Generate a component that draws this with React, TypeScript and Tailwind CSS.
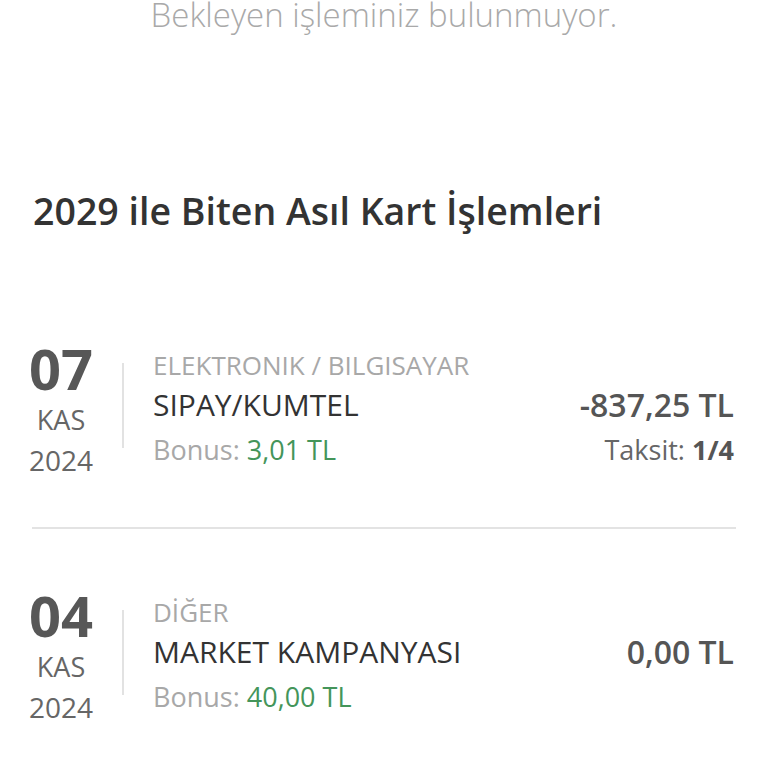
import React from "react";

type Tx = {
  day: string;
  month: string;
  year: string;
  category: string;
  merchant: string;
  bonus: string;
  amount: string;
  taksit?: string;
};

const txs: Tx[] = [
  {
    day: "07",
    month: "KAS",
    year: "2024",
    category: "ELEKTRONIK / BILGISAYAR",
    merchant: "SIPAY/KUMTEL",
    bonus: "3,01 TL",
    amount: "-837,25 TL",
    taksit: "1/4",
  },
  {
    day: "04",
    month: "KAS",
    year: "2024",
    category: "DİĞER",
    merchant: "MARKET KAMPANYASI",
    bonus: "40,00 TL",
    amount: "0,00 TL",
  },
];

function Row({ t, last }: { t: Tx; last: boolean }) {
  return (
    <div className={`flex items-start ${last ? "pt-[60px]" : "pb-[46px] border-b-2 border-[#e3e3e3]"}`}>
      <div className="w-[66px] ml-[-4px] text-center">
        <div className="mt-[-5px] text-[56px] leading-[62px] font-bold text-[#575757]">{t.day}</div>
        <div className="text-[27px] leading-[41px] text-[#666]">{t.month}</div>
        <div className="text-[28px] leading-[41px] text-[#666]">{t.year}</div>
      </div>
      <div className="ml-[28px] mt-[21px] w-[2px] h-[85px] bg-[#e2e2e2]" />
      <div className="ml-[29px] mt-[3px] flex-1">
        <div className="text-[26px] leading-[40px] text-[#a8a8a8]">{t.category}</div>
        <div className="text-[30px] leading-[40px] text-[#333]">{t.merchant}</div>
        <div className="mt-[5px] text-[27px] leading-[40px] text-[#a8a8a8]">
          Bonus: <span className="text-[#44955a]">{t.bonus}</span>
        </div>
      </div>
      <div className="mt-[43px] mr-[2px] text-right">
        <div className="text-[32px] leading-[40px] font-semibold text-[#555]">{t.amount}</div>
        {t.taksit && (
          <div className="mt-[5px] text-[27px] leading-[40px] text-[#666]">
            Taksit: <span className="font-bold text-[#555]">{t.taksit}</span>
          </div>
        )}
      </div>
    </div>
  );
}

export default function App() {
  return (
    <div
      className="w-[768px] h-[768px] bg-white overflow-hidden"
      style={{ fontFamily: '"Open Sans", "Noto Sans", sans-serif' }}
    >
      <p className="mt-[-3px] text-center text-[33px] leading-[36px] font-light text-[#a9a9a9]">
        Bekleyen işleminiz bulunmuyor.
      </p>
      <h2 className="mt-[156px] px-[33px] text-[37.5px] leading-[44px] font-semibold text-[#333]">
        2029 ile Biten Asıl Kart İşlemleri
      </h2>
      <div className="mt-[109px] mx-[32px]">
        {txs.map((t, i) => (
          <Row key={i} t={t} last={i === txs.length - 1} />
        ))}
      </div>
    </div>
  );
}
